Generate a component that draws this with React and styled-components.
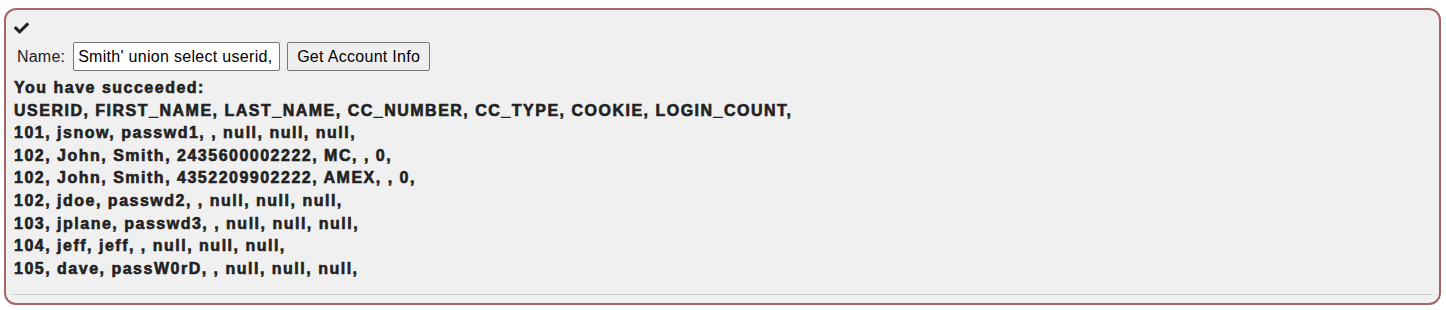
import React from "react";
import styled, { createGlobalStyle } from "styled-components";

const GlobalStyle = createGlobalStyle`
    html, body {
        margin: 0;
        padding: 0;
        background: #ffffff;
    }
    body {
        font-family: "Liberation Sans", Arial, sans-serif;
        color: #333333;
    }
`;

const Page = styled.div`
    padding: 8px 5px 7px 4px;
`;

const Attack = styled.div`
    background: #f0f0f0;
    border: 2px solid #a86464;
    border-radius: 12px;
    padding: 8px 7px 8px 7px;
`;

const Feedback = styled.div`
    height: 20px;
    display: flex;
    align-items: center;
    padding-left: 1px;
`;

const Form = styled.form`
    display: flex;
    align-items: center;
    gap: 7px;
    margin: 4px 0 6px 4px;
    font-size: 16px;
    color: #222222;
`;

const Label = styled.label`
    margin-right: 1px;
    letter-spacing: 0.2px;
`;

const Input = styled.input`
    width: 207px;
    height: 29px;
    box-sizing: border-box;
    border: 1px solid #767676;
    border-radius: 2px;
    padding: 0 4px;
    font: inherit;
    font-size: 16px;
    letter-spacing: 0.3px;
    color: #000;
    background: #fff;
`;

const Button = styled.button`
    height: 29px;
    box-sizing: border-box;
    border: 1px solid #767676;
    border-radius: 2px;
    background: #efefef;
    padding: 0 9px;
    font: inherit;
    font-size: 16px;
    letter-spacing: 0.3px;
    color: #000;
`;

const Output = styled.div`
    font-weight: bold;
    font-size: 16px;
    line-height: 22.6px;
    letter-spacing: 1.5px;
    -webkit-text-stroke: 0.6px #222222;
    color: #222222;
    padding-left: 1px;
`;

const Rule = styled.hr`
    border: none;
    border-top: 1px solid #cccccc;
    margin: 14px 0 0 0;
`;

const CheckIcon = () => (
    <svg width="15" height="12" viewBox="0 0 512 400">
        <path
            fill="#222"
            d="M173.9 389.4L7.5 223c-10-10-10-26.2 0-36.2l36.2-36.2c10-10 26.2-10 36.2 0L192 262.7 432.1 22.6c10-10 26.2-10 36.2 0l36.2 36.2c10 10 10 26.2 0 36.2L210.1 389.4c-10 10-26.2 10-36.2 0z"
        />
    </svg>
);

const rows = [
    "You have succeeded:",
    "USERID, FIRST_NAME, LAST_NAME, CC_NUMBER, CC_TYPE, COOKIE, LOGIN_COUNT,",
    "101, jsnow, passwd1, , null, null, null,",
    "102, John, Smith, 2435600002222, MC, , 0,",
    "102, John, Smith, 4352209902222, AMEX, , 0,",
    "102, jdoe, passwd2, , null, null, null,",
    "103, jplane, passwd3, , null, null, null,",
    "104, jeff, jeff, , null, null, null,",
    "105, dave, passW0rD, , null, null, null,",
];

const App = () => (
    <>
        <GlobalStyle />
        <Page>
            <Attack>
                <Feedback>
                    <CheckIcon />
                </Feedback>
                <Form onSubmit={e => e.preventDefault()}>
                    <Label>Name:</Label>
                    <Input
                        defaultValue="Smith' union select userid, user_name, password, cookie, null, null, null from user_system_data --"
                    />
                    <Button type="submit">Get Account Info</Button>
                </Form>
                <Output>
                    {rows.map(r => (
                        <div key={r}>{r}</div>
                    ))}
                </Output>
                <Rule />
            </Attack>
        </Page>
    </>
);

export default App;
